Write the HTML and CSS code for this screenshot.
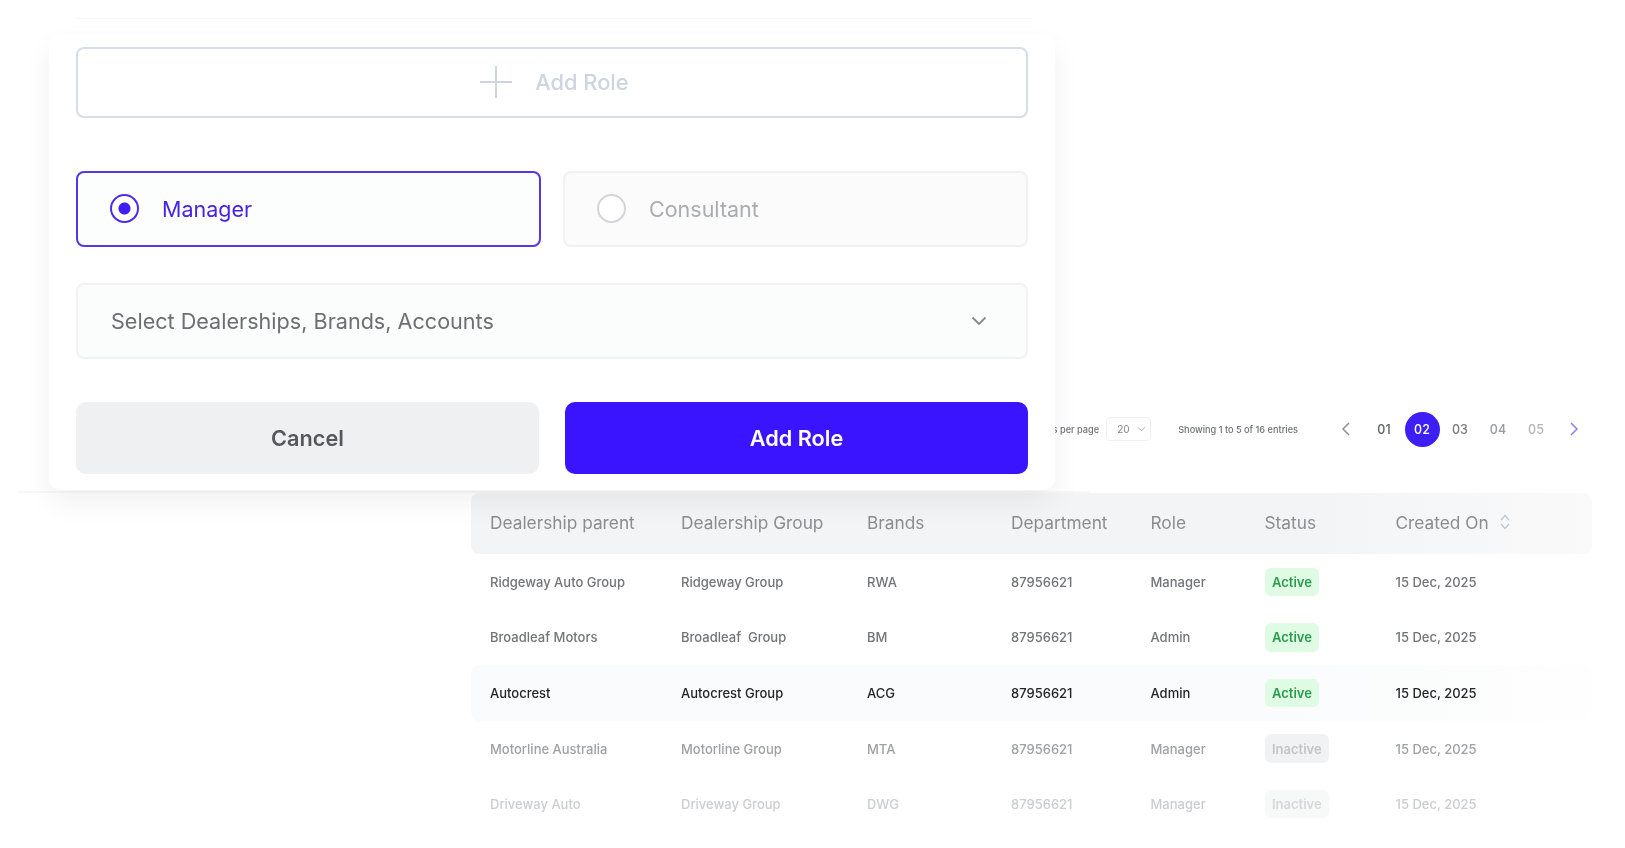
FILE: index.html
```html
<!DOCTYPE html>
<html lang="en">
<head>
<meta charset="utf-8">
<title>Add Role</title>
<link rel="stylesheet" href="styles.css">
</head>
<body>
<div class="stage">
  <section class="panel">
    <div class="pager-row">
      <span class="small">Items per page</span>
      <span class="per-page">20
        <svg class="mini-chev" viewBox="0 0 10 6"><path d="M1 1l4 4 4-4"/></svg>
      </span>
      <span class="small showing">Showing 1 to 5 of 16 entries</span>
      <nav class="pager">
        <span class="cell"><svg class="arrow prev" viewBox="0 0 10 16"><path d="M8 2L2 8l6 6"/></svg></span>
        <span class="cell p1">01</span>
        <span class="cell"><span class="current">02</span></span>
        <span class="cell p3">03</span>
        <span class="cell p4">04</span>
        <span class="cell p5">05</span>
        <span class="cell"><svg class="arrow next" viewBox="0 0 10 16"><path d="M2 2l6 6-6 6"/></svg></span>
      </nav>
    </div>
    <div class="table">
      <div class="row head">
        <span>Dealership parent</span><span>Dealership Group</span><span>Brands</span><span>Department</span><span>Role</span><span>Status</span>
        <span class="sort">Created On
          <svg class="sort-icon" viewBox="0 0 12 18"><path d="M2 7l4-4.500 4 4.500M2 11l4 4.500 4-4.500"/></svg>
        </span>
      </div>
      <div class="row r1"><span>Ridgeway Auto Group</span><span>Ridgeway Group</span><span>RWA</span><span>87956621</span><span>Manager</span><span><b class="badge on">Active</b></span><span>15 Dec, 2025</span></div>
      <div class="row r2"><span>Broadleaf Motors</span><span>Broadleaf&nbsp; Group</span><span>BM</span><span>87956621</span><span>Admin</span><span><b class="badge on">Active</b></span><span>15 Dec, 2025</span></div>
      <div class="row r3"><span>Autocrest</span><span>Autocrest Group</span><span>ACG</span><span>87956621</span><span>Admin</span><span><b class="badge on">Active</b></span><span>15 Dec, 2025</span></div>
      <div class="row r4"><span>Motorline Australia</span><span>Motorline Group</span><span>MTA</span><span>87956621</span><span>Manager</span><span><b class="badge off">Inactive</b></span><span>15 Dec, 2025</span></div>
      <div class="row r5"><span>Driveway Auto</span><span>Driveway Group</span><span>DWG</span><span>87956621</span><span>Manager</span><span><b class="badge off">Inactive</b></span><span>15 Dec, 2025</span></div>
    </div>
  </section>

  <div class="hairline top-line"></div>
  <div class="hairline bottom-line"></div>

  <section class="card">
    <div class="add-box">
      <svg class="plus" viewBox="0 0 34 34"><path d="M17 1v32M1 17h32"/></svg>
      <span>Add Role</span>
    </div>
    <div class="choices">
      <div class="choice selected"><span class="radio"></span><span>Manager</span></div>
      <div class="choice"><span class="radio"></span><span>Consultant</span></div>
    </div>
    <div class="select">
      <span>Select Dealerships, Brands, Accounts</span>
      <svg class="chev" viewBox="0 0 16 10"><path d="M1.500 1.500L8 8l6.500-6.500"/></svg>
    </div>
    <div class="actions">
      <div class="btn cancel">Cancel</div>
      <div class="btn primary">Add Role</div>
    </div>
  </section>
</div>
</body>
</html>
```
FILE: styles.css
```css
* { box-sizing: border-box; }
html, body { margin: 0; height: 100%; background: #fff; overflow: hidden; }
body { font-family: "Inter", "Liberation Sans", sans-serif; color: #6d6f73; }

.stage { position: relative; width: 1625px; height: 848px; overflow: hidden; filter: blur(0.6px); }

/* lower panel */
.panel { margin-left: 471px; width: 1122px; padding-top: 411px; }
.pager-row { display: flex; align-items: center; justify-content: flex-end; height: 36px; margin-bottom: 46px; }
.small { font-size: 9.200px; font-weight: 500; color: #6f7175; white-space: nowrap; }
.per-page { display: flex; align-items: center; gap: 7px; width: 45px; height: 24px; margin-left: 7px; padding-left: 10px; border: 1px solid #eef0f1; border-radius: 4px; font-size: 10px; color: #85878b; }
.mini-chev { width: 9px; height: 6px; fill: none; stroke: #a3a5a9; stroke-width: 1; }
.showing { margin-left: 27px; margin-right: 29px; }
.pager { display: flex; }
.cell { display: flex; align-items: center; justify-content: center; width: 38px; height: 36px; font-size: 12.500px; font-weight: 500; }
.current { display: flex; align-items: center; justify-content: center; width: 35px; height: 35px; border-radius: 50%; background: #3d1ef5; color: #fff; }
.p1 { color: #5f6165; }
.p3 { color: #77797d; }
.p4 { color: #97999d; }
.p5 { color: #b3b5b8; }
.arrow { width: 10px; height: 16px; fill: none; stroke-width: 1.500; }
.prev { stroke: #8d9095; }
.next { stroke: #8e80f2; }

.table { width: 1121px; font-size: 13px; font-weight: 500; }
.row { display: grid; grid-template-columns: 191px 186px 144px 139.500px 114px 131px 1fr; align-items: center; height: 55.600px; padding-left: 19px; white-space: nowrap; }
.head { height: 61px; padding-bottom: 3px; font-size: 17.300px; font-weight: 400; color: #8b8d91; border-radius: 8px; background: linear-gradient(90deg, #f3f4f5 0%, #f3f4f5 75%, #fafafb 100%); }
.sort { display: flex; align-items: center; gap: 10px; }
.sort-icon { width: 12px; height: 18px; fill: none; stroke: #c3c5c9; stroke-width: 1.200; }
.r1, .r2 { color: #727478; }
.r3 { color: #232529; background: linear-gradient(90deg, #fafbfc 0%, #fafbfc 70%, #fefefe 100%); border-radius: 8px; }
.r4 { color: #9fa1a4; }
.r5 { color: #cbcdcf; }

.badge { display: inline-flex; align-items: center; height: 28.500px; padding: 0 7.500px; border-radius: 6px; font-weight: 600; }
.on { background: #dffbe3; color: #2c9a50; }
.off { background: #f1f2f3; color: #c3c5c8; }
.r5 .off { background: #f7f8f8; color: #d6d7d9; }

/* overlay bits */
.hairline { position: absolute; height: 1px; background: #f8f8f8; }
.top-line { left: 76px; top: 18px; width: 955px; }
.bottom-line { left: 17px; top: 491px; width: 1072px; height: 2px; }

.card { position: absolute; left: 49px; top: 35px; width: 1006px; height: 455px; padding: 12px 27px 0; background: #fff; border-radius: 12px; box-shadow: 0 12px 30px rgba(0,0,0,.06); }
.add-box { display: flex; align-items: center; justify-content: center; gap: 22px; height: 71px; padding: 0 0 2px 4px; border: 2px solid #d6dee7; border-radius: 8px; font-size: 21.800px; font-weight: 500; color: #ccd5e0; }
.plus { width: 34px; height: 34px; fill: none; stroke: #ccd5e0; stroke-width: 2; }

.choices { display: grid; grid-template-columns: 465px 465px; gap: 22px; margin-top: 53px; }
.choice { display: flex; align-items: center; gap: 23px; height: 76px; padding: 0 0 1px 32px; border: 2px solid #f0f1f2; border-radius: 8px; background: #fbfbfc; font-size: 21.500px; color: #a9acb1; }
.radio { width: 29px; height: 29px; border: 2px solid #d3d5d8; border-radius: 50%; background: #fff; }
.selected { border-color: #5a35e2; background: #fcfdfd; color: #4a22e6; }
.selected .radio { border-color: #4f2be8; background: radial-gradient(circle, #3f1ef0 0 5.500px, #fff 6.500px); }

.select { display: flex; align-items: center; justify-content: space-between; height: 76px; margin-top: 36px; padding: 0 39px 0 33px; border: 2px solid #f1f2f3; border-radius: 8px; background: #fbfcfc; font-size: 21.600px; color: #6c6f73; }
.chev { width: 16px; height: 10px; fill: none; stroke: #85888c; stroke-width: 1.800; }

.actions { display: grid; grid-template-columns: 463px 463px; gap: 26px; margin-top: 43px; }
.btn { display: flex; align-items: center; justify-content: center; height: 72px; border-radius: 10px; font-size: 21.700px; font-weight: 600; }
.cancel { background: #eff0f1; color: #55585c; }
.primary { background: #3a14ff; color: #fff; }
```
